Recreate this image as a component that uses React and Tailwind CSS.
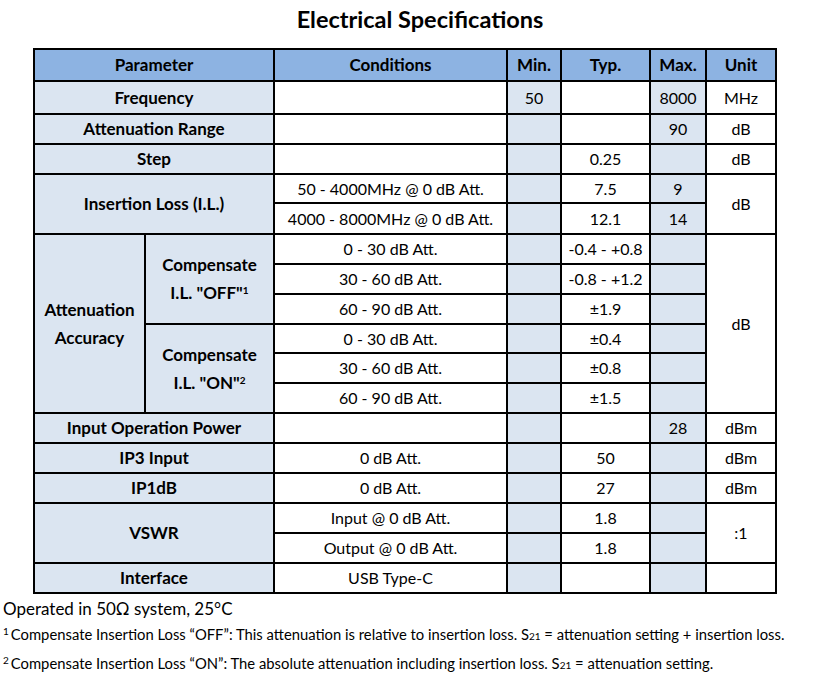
import React from 'react';

const hd = "bg-[#8db3e2] border-2 border-black font-bold text-[17px] text-center";
const pr = "bg-[#dbe5f1] border-2 border-black font-bold text-[17px] text-center";
const wt = "bg-white border-2 border-black text-center";
const lb = "bg-[#dbe5f1] border-2 border-black text-center";

const Row = ({ param, cond, min, typ, max, unit, h = "h-[30px]" }) => (
  <tr className={h}>
    <td colSpan={2} className={pr}>{param}</td>
    <td className={wt}>{cond}</td>
    <td className={lb}>{min}</td>
    <td className={wt}>{typ}</td>
    <td className={lb}>{max}</td>
    <td className={wt}>{unit}</td>
  </tr>
);

const Sup = ({ children }) => <sup className="text-[10px] font-bold">{children}</sup>;

export default function App() {
  return (
    <div className="w-[818px] h-[700px] bg-white text-black font-['Lato',sans-serif]">
      <div className="h-[48px] flex justify-center pl-[22px] pt-[4px]">
        <h1 className="text-[23.5px] font-bold leading-[30px]">Electrical Specifications</h1>
      </div>
      <div className="pl-[33px]">
        <table className="table-fixed border-collapse border-2 border-black text-[16px] leading-[20px] w-[742px]">
          <colgroup>
            <col className="w-[111px]" />
            <col className="w-[129px]" />
            <col className="w-[233px]" />
            <col className="w-[54px]" />
            <col className="w-[89px]" />
            <col className="w-[56px]" />
            <col className="w-[70px]" />
          </colgroup>
          <tbody>
            <tr className="h-[32px]">
              <td colSpan={2} className={hd}>Parameter</td>
              <td className={hd}>Conditions</td>
              <td className={hd}>Min.</td>
              <td className={hd}>Typ.</td>
              <td className={hd}>Max.</td>
              <td className={hd}>Unit</td>
            </tr>
            <Row param="Frequency" min="50" max="8000" unit="MHz" h="h-[33px]" />
            <Row param="Attenuation Range" max="90" unit="dB" />
            <Row param="Step" typ="0.25" unit="dB" />
            <tr className="h-[29px]">
              <td colSpan={2} rowSpan={2} className={pr}>Insertion Loss (I.L.)</td>
              <td className={wt}>50 - 4000MHz @ 0 dB Att.</td>
              <td className={lb}></td>
              <td className={wt}>7.5</td>
              <td className={lb}>9</td>
              <td rowSpan={2} className={wt}>dB</td>
            </tr>
            <tr className="h-[31px]">
              <td className={wt}>4000 - 8000MHz @ 0 dB Att.</td>
              <td className={lb}></td>
              <td className={wt}>12.1</td>
              <td className={lb}>14</td>
            </tr>
            <tr className="h-[30px]">
              <td rowSpan={6} className={pr + " leading-[28px]"}>Attenuation<br />Accuracy</td>
              <td rowSpan={3} className={pr + " leading-[28px]"}>Compensate<br />I.L. "OFF"<Sup>1</Sup></td>
              <td className={wt}>0 - 30 dB Att.</td>
              <td className={lb}></td>
              <td className={wt}>-0.4 - +0.8</td>
              <td className={lb}></td>
              <td rowSpan={6} className={wt}>dB</td>
            </tr>
            <tr className="h-[30px]">
              <td className={wt}>30 - 60 dB Att.</td>
              <td className={lb}></td>
              <td className={wt}>-0.8 - +1.2</td>
              <td className={lb}></td>
            </tr>
            <tr className="h-[30px]">
              <td className={wt}>60 - 90 dB Att.</td>
              <td className={lb}></td>
              <td className={wt}>±1.9</td>
              <td className={lb}></td>
            </tr>
            <tr className="h-[29px]">
              <td rowSpan={3} className={pr + " leading-[28px]"}>Compensate<br />I.L. "ON"<Sup>2</Sup></td>
              <td className={wt}>0 - 30 dB Att.</td>
              <td className={lb}></td>
              <td className={wt}>±0.4</td>
              <td className={lb}></td>
            </tr>
            <tr className="h-[30px]">
              <td className={wt}>30 - 60 dB Att.</td>
              <td className={lb}></td>
              <td className={wt}>±0.8</td>
              <td className={lb}></td>
            </tr>
            <tr className="h-[30px]">
              <td className={wt}>60 - 90 dB Att.</td>
              <td className={lb}></td>
              <td className={wt}>±1.5</td>
              <td className={lb}></td>
            </tr>
            <Row param="Input Operation Power" max="28" unit="dBm" />
            <Row param="IP3 Input" cond="0 dB Att." typ="50" unit="dBm" />
            <Row param="IP1dB" cond="0 dB Att." typ="27" unit="dBm" />
            <tr className="h-[30px]">
              <td colSpan={2} rowSpan={2} className={pr}>VSWR</td>
              <td className={wt}>Input @ 0 dB Att.</td>
              <td className={lb}></td>
              <td className={wt}>1.8</td>
              <td className={lb}></td>
              <td rowSpan={2} className={wt}>:1</td>
            </tr>
            <tr className="h-[30px]">
              <td className={wt}>Output @ 0 dB Att.</td>
              <td className={lb}></td>
              <td className={wt}>1.8</td>
              <td className={lb}></td>
            </tr>
            <Row param="Interface" cond="USB Type-C" />
          </tbody>
        </table>
      </div>
      <div className="pl-[3px] pt-[2px]">
        <p className="text-[17px] leading-[26px]">Operated in 50Ω system, 25°C</p>
        <p className="text-[14.8px] leading-[27px] -mt-[1px]">
          <sup className="text-[10px] mr-[2px]">1</sup>Compensate Insertion Loss “OFF”: This attenuation is relative to insertion loss. S<span className="text-[10px]">21</span> = attenuation setting + insertion loss.
        </p>
        <p className="text-[14.8px] leading-[27px]">
          <sup className="text-[10px] mr-[2px]">2</sup>Compensate Insertion Loss “ON”: The absolute attenuation including insertion loss. S<span className="text-[10px]">21</span> = attenuation setting.
        </p>
      </div>
    </div>
  );
}
